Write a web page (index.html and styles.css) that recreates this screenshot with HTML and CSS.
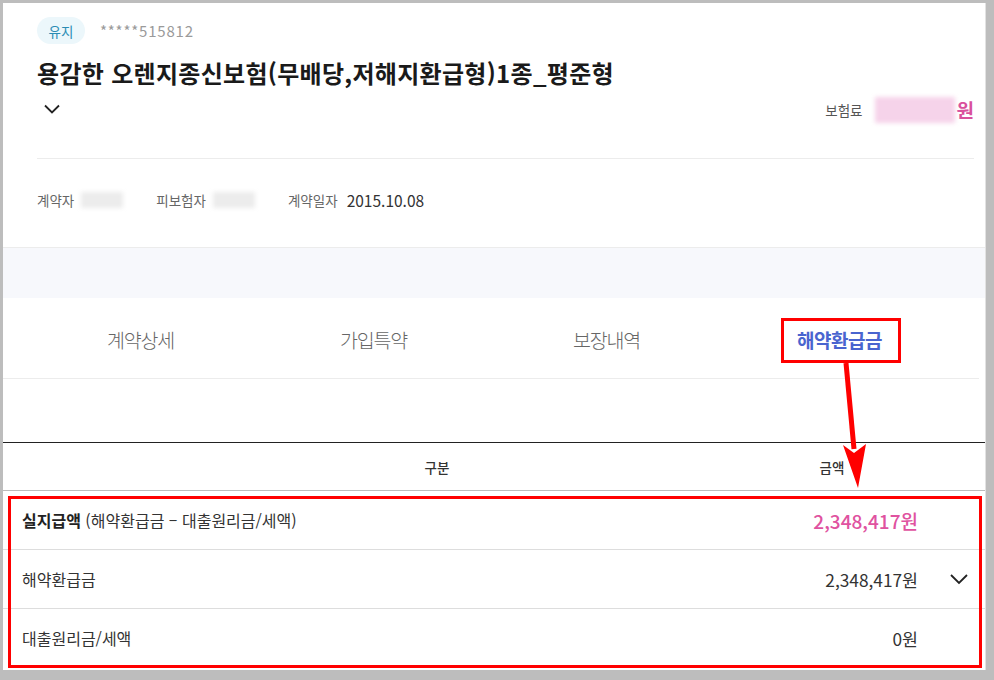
FILE: index.html
```html
<!DOCTYPE html>
<html lang="ko">
<head>
  <meta charset="UTF-8">
  <title>계약 상세 - 해약환급금</title>
  <link rel="stylesheet" href="styles.css">
</head>
<body>
  <div class="page">

    <!-- 계약 요약 -->
    <section class="summary">
      <div class="meta">
        <span class="badge">유지</span>
        <span class="policy-no">*****515812</span>
      </div>
      <h1 class="title">용감한 오렌지종신보험(무배당,저해지환급형)1종_평준형</h1>
      <div class="title-foot">
        <button class="toggle" aria-label="펼치기">
          <svg width="18" height="12" viewBox="0 0 18 12"><path d="M2 2.5 L9 9.5 L16 2.5" fill="none" stroke="#222" stroke-width="1.8"/></svg>
        </button>
        <div class="premium">
          <span class="premium-label">보험료</span>
          <span class="masked masked-pink"></span>
          <span class="won">원</span>
        </div>
      </div>
    </section>

    <div class="parties">
      <span class="label">계약자</span><span class="masked masked-name"></span>
      <span class="label">피보험자</span><span class="masked masked-name"></span>
      <span class="label">계약일자</span><span class="value">2015.10.08</span>
    </div>

    <div class="band"></div>

    <nav class="tabs">
      <a class="tab">계약상세</a>
      <a class="tab">가입특약</a>
      <a class="tab">보장내역</a>
      <a class="tab active">해약환급금</a>
    </nav>

    <!-- 해약환급금 표 -->
    <div class="refund">
      <div class="thead">
        <span></span>
        <span>구분</span>
        <span>금액</span>
      </div>
      <div class="row">
        <span class="cell-name"><b>실지급액</b> (해약환급금 – 대출원리금/세액)</span>
        <span class="cell-amount total">2,348,417원</span>
        <span></span>
      </div>
      <div class="row">
        <span class="cell-name">해약환급금</span>
        <span class="cell-amount">2,348,417원</span>
        <span class="cell-more">
          <svg width="20" height="12" viewBox="0 0 20 12"><path d="M2 2 L10 10 L18 2" fill="none" stroke="#222" stroke-width="1.8"/></svg>
        </span>
      </div>
      <div class="row">
        <span class="cell-name">대출원리금/세액</span>
        <span class="cell-amount">0원</span>
        <span></span>
      </div>
    </div>

    <!-- 강조 표시 -->
    <div class="mark mark-tab"></div>
    <div class="mark mark-rows"></div>
    <svg class="pointer" width="983" height="667" viewBox="0 0 983 667">
      <line x1="843" y1="360" x2="851" y2="446" stroke="#ff0000" stroke-width="5"/>
      <polygon points="840,442 851,450 863,441 855,485" fill="#ff0000"/>
    </svg>
  </div>
</body>
</html>
```

FILE: styles.css
```css
html {
  background: #bdbdbd;
}
body {
  margin: 0;
  padding: 3px 8px 10px 3px;
  font-family: "Noto Sans CJK KR", "Noto Sans", sans-serif;
  color: #222;
}
.page {
  position: relative;
  width: 982px;
  height: 667px;
  background: #fff;
  border-right: 1px solid #e2e2e2;
  overflow: hidden;
}

/* 요약 */
.summary {
  margin: 0 11px 0 34px;
  padding-top: 14px;
  border-bottom: 1px solid #ececec;
  height: 141px;
}
.meta {
  display: flex;
  align-items: center;
  gap: 15px;
}
.badge {
  display: inline-flex;
  align-items: center;
  justify-content: center;
  width: 48px;
  height: 27px;
  border-radius: 14px;
  background: #ecf7fb;
  color: #2b8cb4;
  font-size: 13.5px;
}
.policy-no {
  color: #9a9a9a;
  font-size: 15px;
  letter-spacing: 0.8px;
}
.title {
  margin: 12px 0 0;
  font-size: 24px;
  font-weight: bold;
  line-height: 34px;
  letter-spacing: 0.3px;
  color: #1a1a1a;
}
.title-foot {
  display: flex;
  justify-content: space-between;
  align-items: center;
  margin-top: 6px;
}
.toggle {
  border: 0;
  padding: 0;
  margin: 0 0 0 6px;
  background: none;
  display: flex;
  align-self: flex-start;
  margin-top: 7px;
}
.premium {
  display: flex;
  align-items: center;
}
.premium-label {
  font-size: 13.5px;
  color: #555;
  margin-right: 12px;
}
.masked {
  display: inline-block;
  background: #ececec;
  filter: blur(2px);
}
.masked-pink {
  width: 80px;
  height: 26px;
  background: #f6d3ea;
}
.won {
  color: #d9509c;
  font-size: 19px;
  font-weight: bold;
  margin-left: 2px;
}

.parties {
  display: flex;
  align-items: center;
  height: 81px;
  padding-bottom: 7px;
  padding-left: 34px;
  font-size: 13.5px;
}
.parties .label {
  color: #666;
  margin-right: 7px;
}
.masked-name {
  width: 42px;
  height: 16px;
  margin-right: 33px;
}
.parties .value {
  font-size: 15.5px;
  color: #333;
  margin-left: 2px;
}

.band {
  height: 50px;
  background: #f7f8fc;
  border-top: 1px solid #ececec;
}

/* 탭 */
.tabs {
  display: grid;
  grid-template-columns: repeat(4, 233px);
  padding-left: 21px;
  height: 80px;
  align-items: center;
  border-bottom: 1px solid #ececec;
  margin-right: 6px;
}
.tab {
  text-align: center;
  font-size: 19.5px;
  letter-spacing: -1.2px;
  color: #666;
  font-weight: 300;
  padding-top: 3px;
}
.tab.active {
  color: #4964cf;
  font-weight: bold;
  font-size: 19px;
  letter-spacing: -0.5px;
}

/* 표 */
.refund {
  margin-top: 63px;
  border-top: 1px solid #222;
}
.thead {
  display: grid;
  grid-template-columns: 192px 484px 1fr;
  height: 47px;
  align-items: center;
  border-bottom: 1px solid #bbb;
  font-size: 13.5px;
  font-weight: 500;
  color: #333;
}
.thead span {
  text-align: center;
}
.row {
  display: grid;
  grid-template-columns: 1fr 200px 67px;
  height: 58px;
  align-items: center;
  border-bottom: 1px solid #ddd;
  padding-left: 19px;
  font-size: 16px;
  color: #333;
}
.row:last-child {
  border-bottom: 0;
}
.cell-name b {
  color: #222;
}
.cell-amount {
  text-align: right;
  font-size: 17.3px;
}
.cell-amount.total {
  color: #e052a0;
  font-size: 19px;
  font-weight: 500;
}
.cell-more {
  display: flex;
  justify-content: flex-end;
  padding-right: 16px;
}

/* 강조 표시 */
.mark {
  position: absolute;
  border: 3px solid #ff0000;
  pointer-events: none;
}
.mark-tab {
  left: 778px;
  top: 315px;
  width: 114px;
  height: 39px;
}
.mark-rows {
  left: 5px;
  top: 493px;
  width: 968px;
  height: 166px;
}
.pointer {
  position: absolute;
  left: 0;
  top: 0;
  pointer-events: none;
}
```
